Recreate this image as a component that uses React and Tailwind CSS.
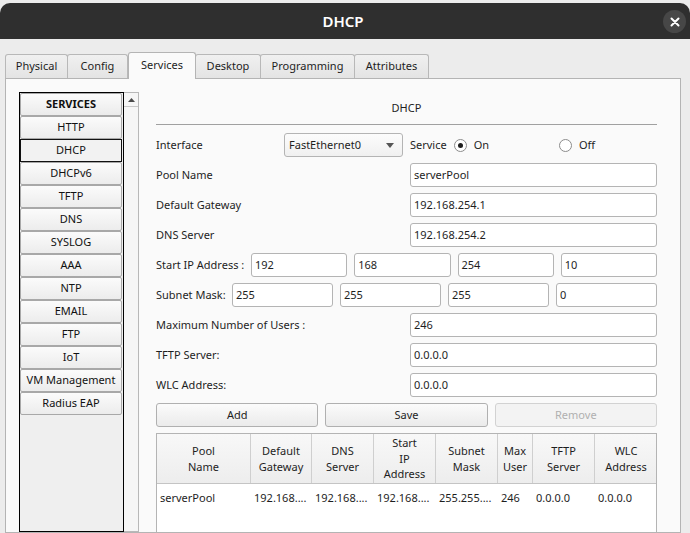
const services = [
  "HTTP",
  "DHCP",
  "DHCPv6",
  "TFTP",
  "DNS",
  "SYSLOG",
  "AAA",
  "NTP",
  "EMAIL",
  "FTP",
  "IoT",
  "VM Management",
  "Radius EAP",
];

const tabs = [
  { name: "Physical", w: "w-[63px]" },
  { name: "Config", w: "w-[61px]" },
  { name: "Services", w: "w-[68px]", active: true },
  { name: "Desktop", w: "w-[66px]" },
  { name: "Programming", w: "w-[95px]" },
  { name: "Attributes", w: "w-[75px]" },
];

const columns = [
  { head: ["Pool", "Name"], val: "serverPool" },
  { head: ["Default", "Gateway"], val: "192.168...." },
  { head: ["DNS", "Server"], val: "192.168...." },
  { head: ["Start", "IP", "Address"], val: "192.168...." },
  { head: ["Subnet", "Mask"], val: "255.255...." },
  { head: ["Max", "User"], val: "246" },
  { head: ["TFTP", "Server"], val: "0.0.0.0" },
  { head: ["WLC", "Address"], val: "0.0.0.0" },
];

function Field({ value, className = "" }) {
  return (
    <div
      className={`h-[24px] border border-[#b4b4b4] rounded-[3px] bg-white pl-[3px] flex items-center text-[11px] text-[#1e1e1e] ${className}`}
    >
      {value}
    </div>
  );
}

function Radio({ checked }) {
  return (
    <span className="w-[13px] h-[13px] rounded-full border border-[#8c8c8c] bg-white flex items-center justify-center">
      {checked && <span className="w-[5px] h-[5px] rounded-full bg-[#1e1e1e]" />}
    </span>
  );
}

function Row({ label, children, labelW = "w-[254px]" }) {
  return (
    <div className="h-[30px] flex items-center">
      <div className={`${labelW} shrink-0 text-[11px] text-[#1e1e1e]`}>{label}</div>
      {children}
    </div>
  );
}

function Btn({ children, disabled }) {
  return (
    <div
      className={`flex-1 h-[24px] rounded-[3px] border flex items-center justify-center text-[11px] ${
        disabled
          ? "border-[#d2d2d2] bg-[#f3f3f3] text-[#b0b0b0]"
          : "border-[#b0b0b0] bg-gradient-to-b from-[#fbfbfb] to-[#ebebeb] text-[#1e1e1e]"
      }`}
    >
      {children}
    </div>
  );
}

export default function App() {
  return (
    <div className="w-[690px] h-[533px] overflow-hidden bg-[#ececec] flex flex-col font-['Noto_Sans',sans-serif]">
      {/* Title bar */}
      <div className="mt-[3px] h-[36px] shrink-0 rounded-t-[10px] bg-[#2f2f2f] relative flex items-center justify-center">
        <span className="text-white text-[15px] font-semibold -ml-[4px]">DHCP</span>
        <div className="absolute right-[4px] top-[7px] w-[23px] h-[23px] rounded-full bg-[#474747] flex items-center justify-center">
          <svg width="10" height="10" viewBox="0 0 10 10">
            <path d="M1.5 1.5 L8.5 8.5 M8.5 1.5 L1.5 8.5" stroke="white" strokeWidth="2" strokeLinecap="round" />
          </svg>
        </div>
      </div>

      {/* Tabs */}
      <div className="h-[39px] shrink-0 flex items-end pl-[5px]">
        {tabs.map((t) =>
          t.active ? (
            <div
              key={t.name}
              className={`${t.w} h-[27px] -mb-px relative z-10 bg-[#fafafa] border border-b-0 border-[#b4b4b4] rounded-t-[3px] flex items-center justify-center text-[11px] text-[#1e1e1e] pb-[1px]`}
            >
              {t.name}
            </div>
          ) : (
            <div
              key={t.name}
              className={`${t.w} h-[24px] bg-gradient-to-b from-[#f0f0f0] to-[#e4e4e4] border border-b-0 border-[#b8b8b8] rounded-t-[3px] -ml-px first:ml-0 flex items-center justify-center text-[11px] text-[#1e1e1e]`}
            >
              {t.name}
            </div>
          )
        )}
      </div>

      {/* Panel */}
      <div className="ml-[5px] w-[676px] flex-1 min-h-0 border border-[#b4b4b4] bg-[#fafafa] flex">
        {/* Services list */}
        <div className="pl-[13px] pt-[13px] flex shrink-0">
          <div className="w-[105px] h-full border border-black bg-[#efefef] flex flex-col pr-px">
            <div className="h-[23px] shrink-0 border border-[#a8a8a8] rounded-[2px] bg-gradient-to-b from-[#fbfbfb] to-[#ebebeb] flex items-center justify-center text-[11px] font-bold text-[#111]">
              SERVICES
            </div>
            {services.map((s) =>
              s === "DHCP" ? (
                <div
                  key={s}
                  className="h-[23px] shrink-0 border-[1.5px] border-[#111] bg-[#f2f2f2] flex items-center justify-center text-[11px] text-[#111]"
                >
                  {s}
                </div>
              ) : (
                <div
                  key={s}
                  className="h-[23px] shrink-0 border border-[#a8a8a8] rounded-[2px] bg-gradient-to-b from-[#fbfbfb] to-[#ececec] flex items-center justify-center text-[11px] text-[#111]"
                >
                  {s}
                </div>
              )
            )}
          </div>
          <div className="w-[15px] h-full border border-l-0 border-[#b8b8b8] bg-[#f6f6f6] flex flex-col">
            <div className="h-[14px] border-b border-[#c8c8c8] flex items-center justify-center">
              <svg width="7" height="4" viewBox="0 0 7 4">
                <path d="M0 4 L3.5 0 L7 4 Z" fill="#4a4a4a" />
              </svg>
            </div>
          </div>
        </div>

        {/* DHCP form */}
        <div className="pl-[17px] pt-[13px] w-[518px] flex flex-col">
          <div className="h-[33px] shrink-0 border-b border-[#a0a0a0] flex items-center justify-center text-[11px] text-[#1e1e1e]">
            DHCP
          </div>

          <div className="mt-[5px] flex flex-col">
            <Row label="Interface" labelW="w-[128px]">
              <div className="w-[119px] h-[24px] border border-[#b4b4b4] rounded-[3px] bg-gradient-to-b from-[#fcfcfc] to-[#f0f0f0] flex items-center justify-between pl-[4px] pr-[8px] text-[11px] text-[#1e1e1e]">
                <span>FastEthernet0</span>
                <svg width="8" height="5" viewBox="0 0 8 5">
                  <path d="M0 0 L8 0 L4 5 Z" fill="#555" />
                </svg>
              </div>
              <div className="ml-[7px] w-[149px] flex items-center gap-[7px] text-[11px] text-[#1e1e1e]">
                <span>Service</span>
                <Radio checked />
                <span>On</span>
              </div>
              <div className="flex items-center gap-[7px] text-[11px] text-[#1e1e1e]">
                <Radio />
                <span>Off</span>
              </div>
            </Row>
            <Row label="Pool Name">
              <Field value="serverPool" className="flex-1" />
            </Row>
            <Row label="Default Gateway">
              <Field value="192.168.254.1" className="flex-1" />
            </Row>
            <Row label="DNS Server">
              <Field value="192.168.254.2" className="flex-1" />
            </Row>
            <Row label="Start IP Address :" labelW="w-[95px]">
              <div className="flex-1 flex gap-[7px]">
                {["192", "168", "254", "10"].map((v, i) => (
                  <Field key={i} value={v} className="flex-1" />
                ))}
              </div>
            </Row>
            <Row label="Subnet Mask:" labelW="w-[76px]">
              <div className="flex-1 flex gap-[7px]">
                {["255", "255", "255", "0"].map((v, i) => (
                  <Field key={i} value={v} className="flex-1" />
                ))}
              </div>
            </Row>
            <Row label="Maximum Number of Users :">
              <Field value="246" className="flex-1" />
            </Row>
            <Row label="TFTP Server:">
              <Field value="0.0.0.0" className="flex-1" />
            </Row>
            <Row label="WLC Address:">
              <Field value="0.0.0.0" className="flex-1" />
            </Row>
          </div>

          <div className="mt-[3px] flex gap-[7px]">
            <Btn>Add</Btn>
            <Btn>Save</Btn>
            <Btn disabled>Remove</Btn>
          </div>

          {/* Pool table */}
          <div className="mt-[6px] flex-1 border border-b-0 border-[#b4b4b4] bg-white flex flex-col">
            <div className="grid grid-cols-[94px_61px_62px_62px_62px_35px_62px_62px] h-[50px] border-b border-[#c4c4c4] bg-gradient-to-b from-[#f8f8f8] to-[#ededed]">
              {columns.map((c, i) => (
                <div
                  key={i}
                  className="border-r border-[#cfcfcf] last:border-r-0 flex flex-col items-center justify-center text-[11px] leading-[15.5px] text-[#1e1e1e]"
                >
                  {c.head.map((h) => (
                    <span key={h}>{h}</span>
                  ))}
                </div>
              ))}
            </div>
            <div className="grid grid-cols-[94px_61px_62px_62px_62px_35px_62px_62px] h-[28px]">
              {columns.map((c, i) => (
                <div key={i} className="pl-[3px] flex items-center text-[11px] text-[#1e1e1e] whitespace-nowrap overflow-hidden">
                  {c.val}
                </div>
              ))}
            </div>
          </div>
        </div>
      </div>
    </div>
  );
}
